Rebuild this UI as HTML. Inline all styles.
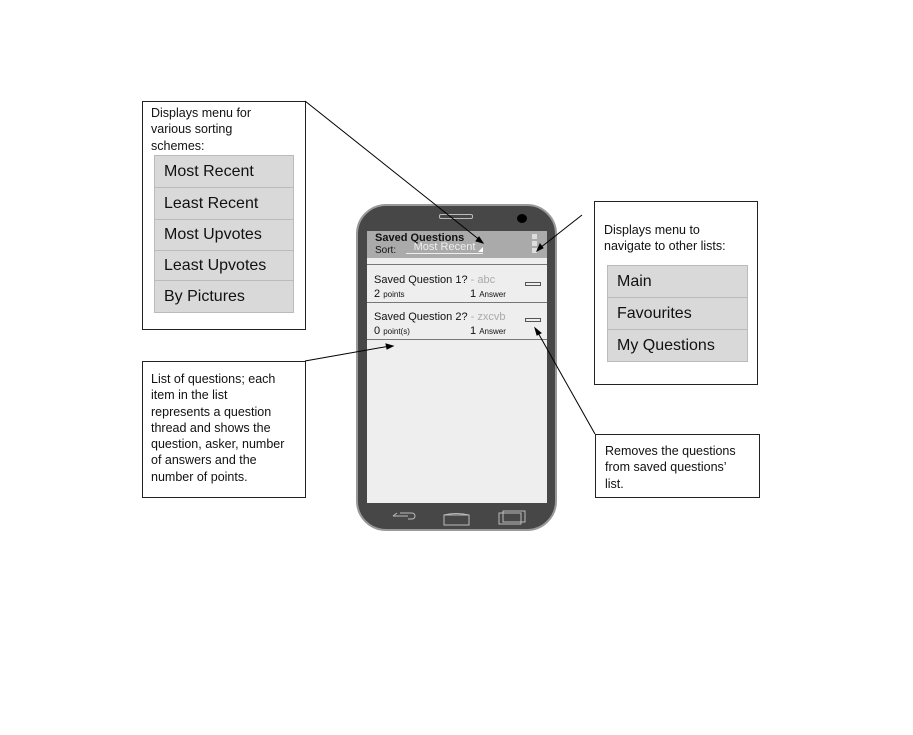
<!DOCTYPE html>
<html><head><style>
body{margin:0;width:913px;height:735px;background:#fff;position:relative;overflow:hidden;font-family:"Liberation Sans",Arial,sans-serif;color:#111}
.a{position:absolute}
.box{position:absolute;border:1px solid #222;background:#fff;box-sizing:border-box;font-size:12.5px;line-height:16.3px}
.menu{position:absolute;background:#d9d9d9;border:1px solid #bbb;box-sizing:border-box}
.menu div{border-bottom:1px solid #bbb;box-sizing:border-box;padding-left:9px;font-size:16px;display:flex;align-items:center}
.menu div:last-child{border-bottom:none}
</style></head><body>
<div class="box" style="left:142px;top:101px;width:164px;height:229px;padding:3px 8px">Displays menu for<br>various sorting<br>schemes:</div>
<div class="menu" style="left:154px;top:155px;width:140px;height:158px">
<div style="height:32px">Most Recent</div><div style="height:32px">Least Recent</div><div style="height:31px">Most Upvotes</div><div style="height:30px">Least Upvotes</div><div style="height:31px">By Pictures</div></div>

<div class="box" style="left:594px;top:201px;width:164px;height:184px;padding:20px 9px">Displays menu to<br>navigate to other lists:</div>
<div class="menu" style="left:607px;top:265px;width:141px;height:97px">
<div style="height:32px">Main</div><div style="height:32px">Favourites</div><div style="height:31px">My Questions</div></div>

<div class="box" style="left:142px;top:361px;width:164px;height:137px;padding:9px 8px">List of questions; each<br>item in the list<br>represents a question<br>thread and shows the<br>question, asker, number<br>of answers and the<br>number of points.</div>
<div class="box" style="left:595px;top:434px;width:165px;height:64px;padding:8px 9px">Removes the questions<br>from saved questions’<br>list.</div>

<!-- phone -->
<div class="a" style="left:356px;top:204px;width:201px;height:327px;border-radius:30px;background:#474747;border:2px solid #999;box-sizing:border-box"></div>
<div class="a" style="left:439px;top:214px;width:34px;height:5px;border:1px solid #bbb;border-radius:2px;box-sizing:border-box"></div>
<div class="a" style="left:517px;top:214px;width:10px;height:9px;border-radius:50%;background:#000"></div>
<div class="a" style="left:367px;top:231px;width:180px;height:272px;background:#eeeeee"></div>
<div class="a" style="left:367px;top:231px;width:180px;height:27px;background:#aaa"></div>
<div class="a" style="left:375px;top:232px;font-size:11px;font-weight:bold">Saved Questions</div>
<div class="a" style="left:375px;top:245px;font-size:10px">Sort:</div>
<div class="a" style="left:406px;top:241px;width:77px;height:12px;border-bottom:1px solid #eee;color:#eee;font-size:11px;text-align:center;line-height:12px">Most Recent</div>
<div class="a" style="left:478px;top:247px;width:0;height:0;border-left:5px solid transparent;border-bottom:5px solid #fff"></div>
<div class="a" style="left:532px;top:234px;width:5px;height:5px;background:#ddd"></div>
<div class="a" style="left:532px;top:241px;width:5px;height:5px;background:#ddd"></div>
<div class="a" style="left:532px;top:248px;width:5px;height:5px;background:#ddd"></div>
<div class="a" style="left:367px;top:264px;width:180px;height:1px;background:#777"></div>
<div class="a" style="left:367px;top:302px;width:180px;height:1px;background:#777"></div>
<div class="a" style="left:367px;top:339px;width:180px;height:1px;background:#777"></div>
<div class="a" style="left:374px;top:274px;font-size:11px">Saved Question 1? <span style="color:#aaa">- abc</span></div>
<div class="a" style="left:374px;top:288px;font-size:11px">2 <span style="font-size:8px">points</span></div>
<div class="a" style="left:470px;top:288px;font-size:11px">1 <span style="font-size:8px">Answer</span></div>
<div class="a" style="left:525px;top:282px;width:16px;height:4px;border:1px solid #555;box-sizing:border-box"></div>
<div class="a" style="left:374px;top:311px;font-size:11px">Saved Question 2? <span style="color:#aaa">- zxcvb</span></div>
<div class="a" style="left:374px;top:325px;font-size:11px">0 <span style="font-size:8px">point(s)</span></div>
<div class="a" style="left:470px;top:325px;font-size:11px">1 <span style="font-size:8px">Answer</span></div>
<div class="a" style="left:525px;top:318px;width:16px;height:4px;border:1px solid #555;box-sizing:border-box"></div>

<svg class="a" style="left:0;top:0" width="913" height="735">
<g fill="none" stroke="#bbb" stroke-width="1">
<path d="M393 516h15M393 516l4 -3M400 513h12a3 3 0 0 1 0 6h-4"/>
<path d="M444 515h25v10h-25zM444 515q12 -3 25 0"/>
<rect x="499" y="513" width="22" height="11"/><rect x="503" y="511" width="22" height="11"/>
</g>
<g stroke="#000" stroke-width="1" fill="#000">
<line x1="305" y1="101" x2="481" y2="241"/><path d="M483 243l-7-2 3-4z"/>
<line x1="582" y1="215" x2="540" y2="248"/><path d="M537 251l3-7 3 4z"/>
<line x1="305" y1="361" x2="390" y2="346"/><path d="M393 346l-6 3-1-5z"/>
<line x1="595" y1="434" x2="537" y2="331"/><path d="M535 328l6 5-4 2z"/>
</g>
</svg>
</body></html>
